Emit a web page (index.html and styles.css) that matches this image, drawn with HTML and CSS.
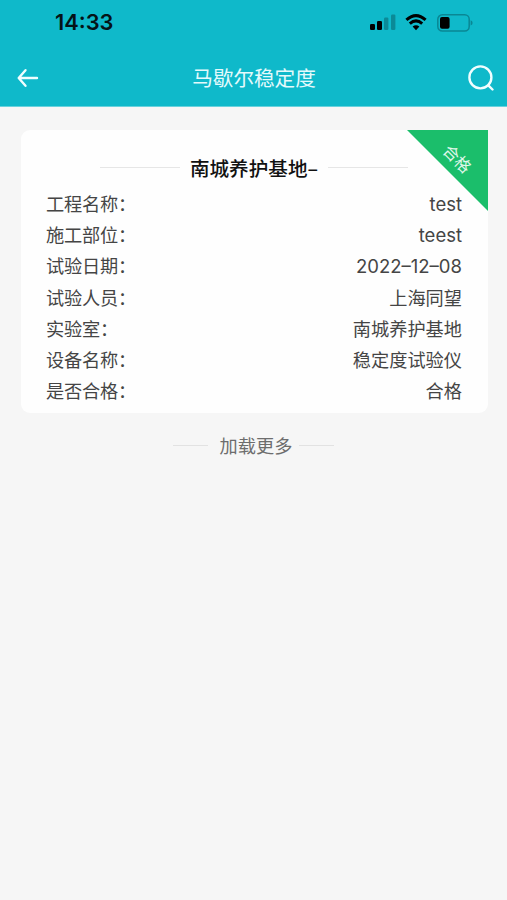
FILE: index.html
```html
<!DOCTYPE html>
<html lang="zh-CN">
<head>
  <meta charset="UTF-8">
  <meta name="viewport" content="width=device-width, initial-scale=1.0">
  <title>马歇尔稳定度</title>
  <link rel="stylesheet" href="styles.css">
</head>
<body>
  <header class="header">
    <div class="status-bar">
      <span class="time">14:33</span>
      <div class="status-icons">
        <svg class="signal" width="26" height="17" viewBox="0 0 26 17">
          <rect x="0" y="10" width="5" height="6" rx="1.3"/>
          <rect x="7" y="7" width="5" height="9" rx="1.3"/>
          <rect class="off" x="14" y="3.5" width="4.4" height="12.5" rx="1.2"/>
          <rect class="off" x="21" y="0.5" width="4.4" height="15.5" rx="1.2"/>
        </svg>
        <svg class="wifi" width="22" height="17" viewBox="0 0 22 17">
          <path d="M1.4 5.9Q11 -2.7 20.6 5.9"/>
          <path d="M4.8 9.6Q11 4.2 17.2 9.6"/>
          <path class="dot" d="M7.6 12.6Q11 10 14.4 12.6L11 16.2Z"/>
        </svg>
        <svg class="battery" width="36" height="18" viewBox="0 0 36 18">
          <rect class="shell" x="0.8" y="0.8" width="31.4" height="16.2" rx="4.5"/>
          <rect x="3" y="3" width="9.6" height="11.8" rx="2"/>
          <path class="cap" d="M33.6 6.3Q35.6 7 35.6 8.9T33.6 11.5Z"/>
        </svg>
      </div>
    </div>
    <nav class="nav-bar">
      <svg class="back" width="22" height="20" viewBox="0 0 22 20">
        <path d="M8.5 2.2L1.7 10l6.8 7.8M2 10h18"/>
      </svg>
      <h1>马歇尔稳定度</h1>
      <svg class="search" width="26" height="26" viewBox="0 0 26 26">
        <circle cx="12.4" cy="12.4" r="11"/>
        <path d="M20.3 20.3l4.2 4.2"/>
      </svg>
    </nav>
  </header>

  <main>
    <section class="card">
      <div class="badge"><span>合格</span></div>
      <h2 class="card-title">南城养护基地–</h2>
      <dl class="info">
        <div class="row"><dt>工程名称：</dt><dd class="latin">test</dd></div>
        <div class="row"><dt>施工部位：</dt><dd class="latin">teest</dd></div>
        <div class="row"><dt>试验日期：</dt><dd class="latin">2022–12–08</dd></div>
        <div class="row"><dt>试验人员：</dt><dd>上海同望</dd></div>
        <div class="row"><dt>实验室：</dt><dd>南城养护基地</dd></div>
        <div class="row"><dt>设备名称：</dt><dd>稳定度试验仪</dd></div>
        <div class="row"><dt>是否合格：</dt><dd>合格</dd></div>
      </dl>
    </section>
    <div class="load-more">加载更多</div>
  </main>
</body>
</html>
```
FILE: styles.css
```css
* {
  box-sizing: border-box;
}
body {
  margin: 0;
  min-height: 100vh;
  background: #f6f6f6;
  color: #454545;
  font-family: "Noto Sans CJK SC", sans-serif;
}
h1, h2, dl, dd {
  margin: 0;
}
svg {
  display: block;
}
.header {
  height: 107px;
  background: #0fb9ca;
  border-bottom: 1px solid #68d2dd;
}
.status-bar {
  display: flex;
  justify-content: space-between;
  align-items: center;
  height: 45px;
  padding: 0 34px 0 55px;
}
.time {
  color: #051317;
  font: 600 21.8px/1 Inter, sans-serif;
}
.status-icons {
  display: flex;
  align-items: center;
  gap: 10px;
}
.signal {
  margin-right: -1px;
}
.signal .off {
  opacity: 0.25;
}
.wifi path {
  fill: none;
  stroke: #000;
  stroke-width: 3;
}
.wifi .dot {
  fill: #000;
  stroke: none;
}
.battery .shell {
  fill: none;
  stroke: #0a8794;
  stroke-width: 1.5;
}
.battery .cap {
  fill: #0a8794;
}
.nav-bar {
  display: flex;
  justify-content: space-between;
  align-items: center;
  height: 61px;
  padding: 4px 13px 0 17px;
}
.nav-bar h1 {
  color: #e4fafc;
  font-size: 20.6px;
  font-weight: 400;
  line-height: 30px;
  margin: -1px 0 0 1px;
}
.back, .search {
  fill: none;
  stroke: #f0feff;
  stroke-width: 2.4;
  stroke-linecap: round;
  stroke-linejoin: round;
}
.card {
  position: relative;
  height: 283px;
  margin: 23px 19px 0 21px;
  padding: 21px 26px 0 25px;
  background: #fefefe;
  border-radius: 9px;
}
.badge {
  position: absolute;
  top: 0;
  right: 0;
  width: 81px;
  height: 81px;
  background: #1bbe6b;
  clip-path: polygon(0 0, 100% 0, 100% 100%);
}
.badge span {
  position: absolute;
  top: 17px;
  left: 35px;
  color: #e0f8eb;
  font-size: 16px;
  line-height: 22px;
  transform: rotate(45deg);
}
.card-title {
  display: flex;
  justify-content: center;
  align-items: center;
  gap: 10px;
  height: 32px;
  color: #111;
  font-size: 19.6px;
  font-weight: 500;
}
.card-title::before, .card-title::after {
  content: "";
  width: 80px;
  height: 1px;
  background: #e6e6e6;
}
.info {
  margin-top: 5px;
}
.row {
  display: flex;
  justify-content: space-between;
  height: 31.2px;
  font-size: 18.2px;
  line-height: 31.2px;
}
/* pull the full-width colon in a little */
.row dt {
  letter-spacing: -0.2px;
}
.row .latin {
  padding-top: 1px;
  font-family: Inter, sans-serif;
  font-size: 18.5px;
}
.load-more {
  display: flex;
  justify-content: center;
  align-items: center;
  gap: 7px;
  height: 64px;
  color: #6d6d6d;
  font-size: 18.2px;
}
.load-more::before, .load-more::after {
  content: "";
  width: 35px;
  height: 1px;
  background: #e2e2e2;
}
.load-more::before {
  margin-right: 5px;
}
```
